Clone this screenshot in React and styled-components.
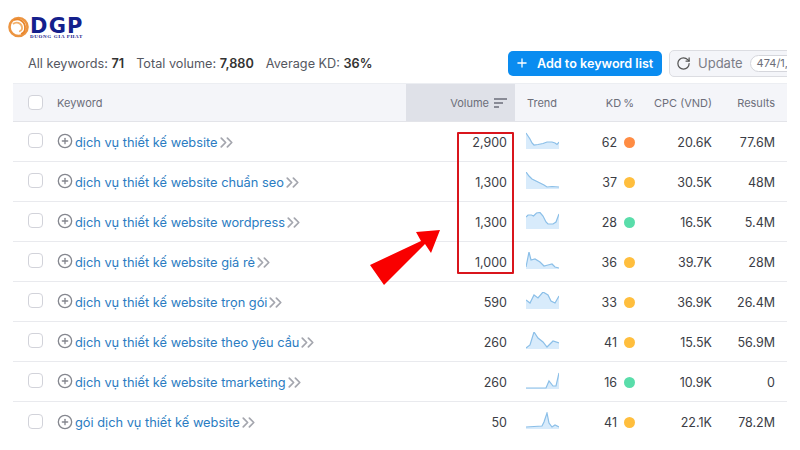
import React from "react";
import styled, { createGlobalStyle } from "styled-components";
import { ChevronsRight, CirclePlus, Plus, RotateCw } from "lucide-react";

const GlobalStyle = createGlobalStyle`
    html, body {
        margin: 0;
        background: #fff;
    }
    body {
        font-family: Inter, "Noto Sans", sans-serif;
        color: #333;
    }
`;

const rows = [
    { name: "dịch vụ thiết kế website", volume: "2,900", kd: 62, level: "hard", cpc: "20.6K", results: "77.6M", trend: "0,1 2,4 4,7 6,11 8,13 12,12.5 17,11.5 21,10 26,10 29,11 31,12.5 33,10" },
    { name: "dịch vụ thiết kế website chuẩn seo", volume: "1,300", kd: 37, level: "mid", cpc: "30.5K", results: "48M", trend: "0,0 3,4 6,7 10,9 14,11 18,13 21,15 26,14.5 33,15" },
    { name: "dịch vụ thiết kế website wordpress", volume: "1,300", kd: 28, level: "easy", cpc: "16.5K", results: "5.4M", trend: "0,5 2,3 5.5,3 7.5,4 10.5,1 14,0.5 17,4 20,10 22,12 27,12 30,10 33,2" },
    { name: "dịch vụ thiết kế website giá rẻ", volume: "1,000", kd: 36, level: "mid", cpc: "39.7K", results: "28M", trend: "0,15 3,0 5,8 9,7 14,10 18,14 22,13 26,12 29,15 33,16" },
    { name: "dịch vụ thiết kế website trọn gói", volume: "590", kd: 33, level: "mid", cpc: "36.9K", results: "26.4M", trend: "0,8 4,11 8,3 12,6 17,0 22,3 25,9 29,11 33,4" },
    { name: "dịch vụ thiết kế website theo yêu cầu", volume: "260", kd: 41, level: "mid", cpc: "15.5K", results: "56.9M", trend: "0,16 4,13 8,0 12,6 17,10 21,15 27,9 33,11" },
    { name: "dịch vụ thiết kế website tmarketing", volume: "260", kd: 16, level: "easy", cpc: "10.9K", results: "0", trend: "0,16 20,16 23,9 27,14 30,14 33,1" },
    { name: "gói dịch vụ thiết kế website", volume: "50", kd: 41, level: "mid", cpc: "22.1K", results: "78.2M", trend: "0,15 16,14 18,10 21,1 23,11 26,15 29,13 33,15" },
];

const levelColors = {
    hard: "#ff8c43",
    mid: "#ffbe3d",
    easy: "#59ddaa",
};

function Trend({ points }) {
    return (
        <svg width="33" height="17" viewBox="0 0 33 17">
            <polygon points={`0,17 ${points} 33,17`} fill="#d8ebfb" />
            <polyline points={points} fill="none" stroke="#8bbfe8" strokeWidth="1.2" />
        </svg>
    );
}

function App() {
    return (
        <Page>
            <GlobalStyle />
            <Logo>
                <svg width="21" height="22" viewBox="0 0 21 22">
                    <circle cx="10.5" cy="11" r="9" fill="none" stroke="#ec9440" strokeWidth="2.6" />
                    <path d="M6 4 a8 8 0 0 1 11 8 a6 6 0 0 1-4 6" fill="none" stroke="#e9852a" strokeWidth="1.8" />
                    <path d="M5 8 a5.5 5.5 0 0 1 9 3 a4 4 0 0 1-3 4.5" fill="none" stroke="#f3b06a" strokeWidth="1.8" />
                    <circle cx="8" cy="13" r="3.2" fill="#fff" />
                </svg>
                <LogoText>
                    <LogoName>DGP</LogoName>
                    <LogoSub>DUONG GIA PHAT</LogoSub>
                </LogoText>
            </Logo>

            <Content>
                <Toolbar>
                    <Stats>
                        <span>All keywords: <b>71</b></span>
                        <span>Total volume: <b>7,880</b></span>
                        <span>Average KD: <b>36%</b></span>
                    </Stats>
                    <AddButton>
                        <Plus size={14} strokeWidth={2.2} />
                        Add to keyword list
                    </AddButton>
                    <UpdateButton>
                        <RotateCw size={15} strokeWidth={2} color="#555" />
                        Update
                        <Quota>474/1,000</Quota>
                    </UpdateButton>
                </Toolbar>

                <Table>
                    <HeaderRow>
                        <Cell><CheckBox /></Cell>
                        <HeadCell>Keyword</HeadCell>
                        <VolumeHead>
                            Volume
                            <svg width="13" height="10" viewBox="0 0 13 10">
                                <path d="M0 1h13M0 5h9M0 9h5" stroke="#6c6e79" strokeWidth="1.5" />
                            </svg>
                        </VolumeHead>
                        <HeadCell $pad>Trend</HeadCell>
                        <KdHead $right>KD %</KdHead>
                        <HeadCell $right>CPC (VND)</HeadCell>
                        <HeadCell $right>Results</HeadCell>
                    </HeaderRow>
                    {rows.map((row) => (
                        <Row key={row.name}>
                            <CheckCell><CheckBox /></CheckCell>
                            <KeywordCell>
                                <AddIcon size={16} color="#85878f" strokeWidth={2} />
                                <KeywordLink>{row.name}</KeywordLink>
                                <MoreIcon size={21} color="#a4a6ae" strokeWidth={2} />
                            </KeywordCell>
                            <NumberCell $pad={8}>{row.volume}</NumberCell>
                            <TrendCell><Trend points={row.trend} /></TrendCell>
                            <KdCell>
                                {row.kd}
                                <Dot $level={row.level} />
                            </KdCell>
                            <NumberCell>{row.cpc}</NumberCell>
                            <NumberCell>{row.results}</NumberCell>
                        </Row>
                    ))}
                </Table>
            </Content>

            <Highlight />
            <Arrow width="72" height="56" viewBox="0 0 72 56">
                <polygon points="70,0 46,2 51,11 0,35 14,55 55,14 61,23" fill="#f90000" />
            </Arrow>
        </Page>
    );
}

const Page = styled.div`
    position: relative;
    width: 800px;
    height: 450px;
    overflow: hidden;
    background: #fff;
`;

const Logo = styled.div`
    display: flex;
    align-items: flex-start;
    gap: 1px;
    height: 46px;
    padding: 16px 0 0 8px;
    box-sizing: border-box;
`;

const LogoText = styled.div`
    display: flex;
    flex-direction: column;
    margin-top: 2px;
`;

const LogoName = styled.div`
    font-family: "DejaVu Sans", sans-serif;
    font-weight: 700;
    font-size: 21px;
    line-height: 16px;
    letter-spacing: 1.2px;
    color: #14208c;
`;

const LogoSub = styled.div`
    font-family: "Liberation Serif", serif;
    font-weight: 700;
    font-size: 5px;
    line-height: 6px;
    letter-spacing: 0.65px;
    white-space: nowrap;
    color: #14208c;
`;

const Content = styled.div`
    width: 774px;
    margin-left: 13px;
    overflow: hidden;
`;

const Toolbar = styled.div`
    display: flex;
    align-items: center;
    height: 34px;
    padding: 0 0 3px 15px;
`;

const Stats = styled.div`
    display: flex;
    gap: 12px;
    width: 480px;
    flex: none;
    font-size: 12.7px;
    color: #55575f;

    b {
        font-weight: 600;
        color: #333;
    }
`;

const AddButton = styled.div`
    display: flex;
    align-items: center;
    gap: 8px;
    flex: none;
    width: 154px;
    height: 25px;
    padding-left: 7px;
    box-sizing: border-box;
    border-radius: 5px;
    background: #0a8cf0;
    color: #fff;
    font-size: 12.6px;
    font-weight: 600;
    white-space: nowrap;
`;

const UpdateButton = styled.div`
    display: flex;
    align-items: center;
    gap: 7px;
    flex: none;
    height: 25px;
    margin-left: 7px;
    padding: 0 6px;
    border: 1px solid #dcdde2;
    border-radius: 5px;
    background: #f4f5f9;
    color: #7b7d87;
    font-size: 13px;
    white-space: nowrap;
`;

const Quota = styled.span`
    padding: 0 6px;
    border: 1px solid #d5d6dc;
    border-radius: 9px;
    background: #fff;
    color: #6c6e79;
    font-size: 11px;
    line-height: 15px;
`;

const Table = styled.div`
    display: flex;
    flex-direction: column;
`;

const Row = styled.div`
    display: grid;
    grid-template-columns: 44px 349px 109px 72px 50px 75px 63px 12px;
    align-items: center;
    height: 40px;
    padding-top: 1px;
    font-size: 12.5px;
    color: #3b3d45;
    border-bottom: 1px solid #e9eaee;
    box-sizing: border-box;

    &:last-child {
        border-bottom: none;
    }
`;

const HeaderRow = styled(Row)`
    height: 39px;
    padding-top: 0;
    align-items: stretch;
    background: #f4f5f9;
    border-top: 1px solid #eceef2;
    border-bottom: 1px solid #e3e4e9;
    font-size: 11px;
    color: #6c6e79;
`;

const Cell = styled.div`
    display: flex;
    align-items: center;
    padding-left: 15px;
`;

const CheckCell = styled(Cell)`
    margin-top: -3px;
`;

const HeadCell = styled.div`
    display: flex;
    align-items: center;
    justify-content: ${(p) => (p.$right ? "flex-end" : "flex-start")};
    padding-left: ${(p) => (p.$pad ? "12px" : "0")};
`;

const KdHead = styled(HeadCell)`
    padding-right: 3px;
    word-spacing: -1px;
`;

const VolumeHead = styled(HeadCell)`
    justify-content: flex-end;
    gap: 5px;
    padding-right: 8px;
    background: #dfe1e8;
`;

const CheckBox = styled.div`
    width: 13px;
    height: 13px;
    border: 1px solid #d2d3da;
    border-radius: 4px;
    background: #fff;
`;

const KeywordCell = styled.div`
    display: flex;
    align-items: center;
    gap: 2px;
`;

const AddIcon = styled(CirclePlus)`
    margin-top: -2px;
`;

const KeywordLink = styled.span`
    color: #2a7cc2;
    font-size: 12.8px;
    white-space: nowrap;
`;

const MoreIcon = styled(ChevronsRight)`
    margin-left: -4px;
`;

const NumberCell = styled.div`
    text-align: right;
    padding-right: ${(p) => p.$pad || 0}px;
`;

const TrendCell = styled.div`
    display: flex;
    padding-left: 11px;
    margin-top: -4px;
`;

const KdCell = styled.div`
    display: flex;
    align-items: center;
    justify-content: flex-end;
    gap: 7px;
    padding-right: 2px;
`;

const Dot = styled.span`
    width: 11px;
    height: 11px;
    border-radius: 50%;
    background: ${(p) => levelColors[p.$level]};
`;

// annotations drawn on top of the screenshot
const Highlight = styled.div`
    position: absolute;
    left: 457px;
    top: 132px;
    width: 53px;
    height: 138px;
    border: 2px solid #d9151c;
    border-radius: 1px;
`;

const Arrow = styled.svg`
    position: absolute;
    left: 370px;
    top: 230px;
`;

export default App;
